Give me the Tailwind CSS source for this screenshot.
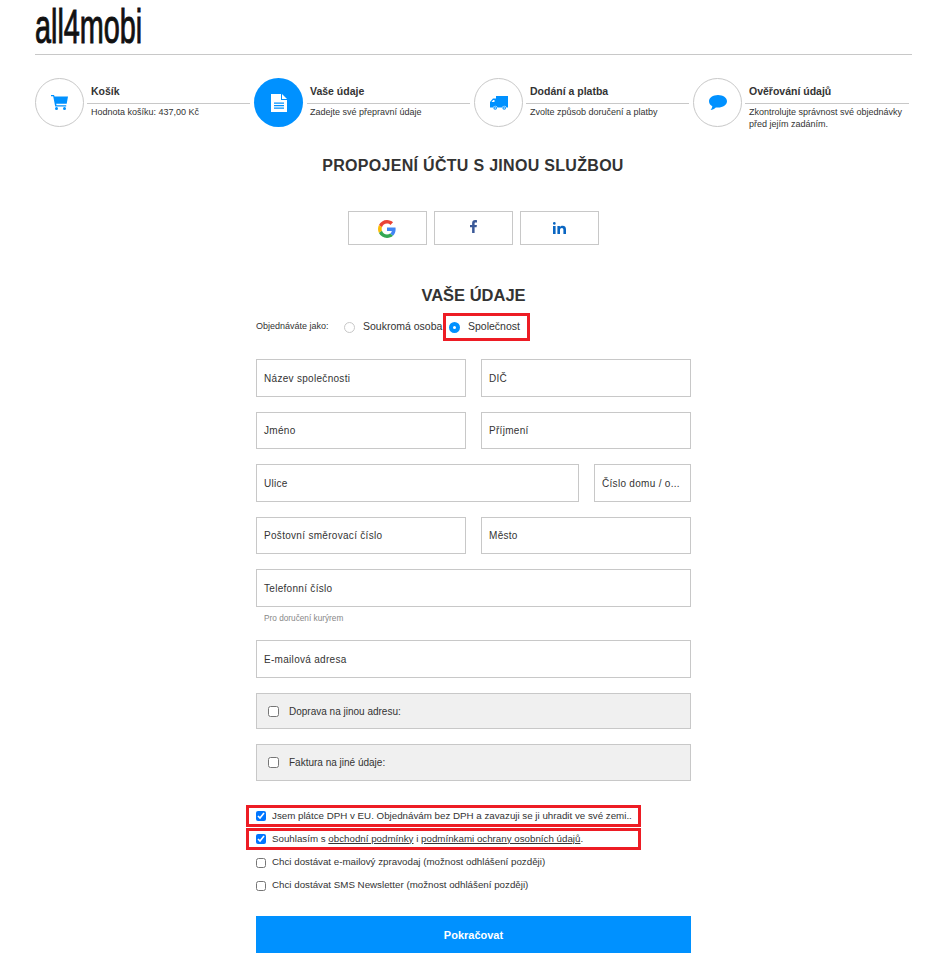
<!DOCTYPE html>
<html lang="cs">
<head>
    <meta charset="UTF-8">
    <script src="https://cdn.jsdelivr.net/npm/@tailwindcss/browser@4"></script>
</head>
<body class="bg-white text-[#333] font-['Liberation_Sans',Arial,sans-serif] overflow-hidden">
    <div class="w-[946px] h-[972px] overflow-hidden">
        <!-- logo -->
        <header class="mx-[35px] w-[877px] h-[55px] pt-[3px] border-b border-[#c8c8c8]">
            <div class="h-[48px] text-[48px] leading-[48px] text-[#111] [-webkit-text-stroke:1px_#111] origin-left scale-x-[0.6] whitespace-nowrap">all4mobi</div>
        </header>

        <!-- steps -->
        <nav class="flex ml-[35px] mt-[23px] h-[50px]">
            <div class="flex w-[219px]">
                <div class="w-[49px] h-[49px] shrink-0 rounded-full border border-[#c8c8c8] flex items-center justify-center">
                    <svg class="w-[17px] h-[15px]" viewBox="0 0 17 15" fill="#0091ff"><path d="M0 0h3l.6 1.6H17l-1.3 7.2H5.200l.3 1.400h9.700v1.300H4.200L2.200 1.300H0z"/><circle cx="5.500" cy="13.500" r="1.500"/><circle cx="13.500" cy="13.500" r="1.500"/></svg>
                </div>
                <div class="w-[163px] ml-[3px]">
                    <div class="h-[26px] pl-[4px] pt-[7px] text-[10.500px] leading-[13px] font-bold border-b border-[#c8c8c8]">Košík</div>
                    <div class="pl-[4px] pt-[2px] text-[9px] leading-[13px]">Hodnota košíku: 437,00 Kč</div>
                </div>
            </div>
            <div class="flex w-[220px]">
                <div class="w-[49px] h-[49px] shrink-0 rounded-full bg-[#0091ff] flex items-center justify-center">
                    <svg class="w-[16px] h-[18px]" viewBox="0 0 16 18" fill="#fff"><path d="M0 0h10v6h6v12H0z"/><path d="M11 0l5 5h-5z"/><path d="M3 8.500h10v1.200H3zM3 11h10v1.200H3zM3 13.500h10v1.200H3z" fill="#0091ff"/></svg>
                </div>
                <div class="w-[163px] ml-[4px]">
                    <div class="h-[26px] pl-[3px] pt-[7px] text-[10.500px] leading-[13px] font-bold border-b border-[#c8c8c8]">Vaše údaje</div>
                    <div class="pl-[3px] pt-[2px] text-[9px] leading-[13px]">Zadejte své přepravní údaje</div>
                </div>
            </div>
            <div class="flex w-[219px]">
                <div class="w-[49px] h-[49px] shrink-0 rounded-full border border-[#c8c8c8] flex items-center justify-center">
                    <svg class="w-[18px] h-[14px]" viewBox="0 0 18 14" fill="#0091ff"><path d="M6 0h12v11.500h-1.600a2.200 2.200 0 0 0-4.300 0H7.400a2.200 2.200 0 0 0-4.300 0H0V6l3-3.500h3z"/><path d="M1.500 6h3V4H3.200z" fill="#fff"/><circle cx="5.200" cy="12" r="1.800"/><circle cx="14.200" cy="12" r="1.800"/><circle cx="5.200" cy="12" r=".7" fill="#fff"/><circle cx="14.200" cy="12" r=".7" fill="#fff"/></svg>
                </div>
                <div class="w-[163px] ml-[3px]">
                    <div class="h-[26px] pl-[4px] pt-[7px] text-[10.500px] leading-[13px] font-bold border-b border-[#c8c8c8]">Dodání a platba</div>
                    <div class="pl-[4px] pt-[2px] text-[9px] leading-[13px]">Zvolte způsob doručení a platby</div>
                </div>
            </div>
            <div class="flex w-[219px]">
                <div class="w-[49px] h-[49px] shrink-0 rounded-full border border-[#c8c8c8] flex items-center justify-center">
                    <svg class="w-[18px] h-[15px]" viewBox="0 0 18 15" fill="#0091ff"><path d="M9 0c5 0 9 2.800 9 6.300s-4 6.300-9 6.300c-.8 0-1.500-.1-2.200-.2C5.400 13.700 3.500 14.800 1.500 15c1-1 1.700-2.200 1.800-3.700C1.300 10.200 0 8.400 0 6.300 0 2.800 4 0 9 0z"/></svg>
                </div>
                <div class="w-[164px] ml-[3px]">
                    <div class="h-[26px] pl-[4px] pt-[7px] text-[10.500px] leading-[13px] font-bold border-b border-[#c8c8c8]">Ověřování údajů</div>
                    <div class="pl-[4px] pt-[2px] text-[9px] leading-[12px] whitespace-nowrap">Zkontrolujte správnost své objednávky<br>před jejím zadáním.</div>
                </div>
            </div>
        </nav>

        <h2 class="mt-[28px] text-center text-[16px] leading-[20px] font-bold tracking-[0.3px]">PROPOJENÍ ÚČTU S JINOU SLUŽBOU</h2>

        <!-- social -->
        <div class="flex justify-center gap-[7px] mt-[35px]">
            <div class="w-[79px] h-[34px] border border-[#c8c8c8] flex items-center justify-center">
                <svg class="w-[18px] h-[18px] mt-[2px]" viewBox="0 0 48 48"><path fill="#EA4335" d="M24 9.500c3.540 0 6.710 1.220 9.210 3.600l6.850-6.850C35.900 2.380 30.470 0 24 0 14.620 0 6.510 5.380 2.560 13.220l7.980 6.190C12.430 13.720 17.740 9.500 24 9.500z"/><path fill="#4285F4" d="M46.980 24.550c0-1.570-.15-3.090-.38-4.550H24v9.020h12.940c-.58 2.960-2.260 5.480-4.780 7.180l7.730 6c4.510-4.180 7.090-10.360 7.090-17.650z"/><path fill="#FBBC05" d="M10.530 28.590c-.48-1.450-.76-2.990-.76-4.590s.27-3.140.76-4.590l-7.980-6.190C.92 16.460 0 20.120 0 24c0 3.880.92 7.540 2.560 10.780l7.970-6.190z"/><path fill="#34A853" d="M24 48c6.480 0 11.930-2.130 15.890-5.810l-7.730-6c-2.150 1.450-4.920 2.300-8.160 2.300-6.260 0-11.570-4.220-13.470-9.910l-7.980 6.190C6.510 42.620 14.620 48 24 48z"/></svg>
            </div>
            <div class="w-[79px] h-[34px] border border-[#c8c8c8] flex items-center justify-center">
                <svg class="w-[7px] h-[13px] -mt-[3px]" viewBox="0 0 7 13" fill="#3b5998"><path d="M4.600 13V7.200h2l.3-2.300H4.600V3.500c0-.7.200-1.100 1.100-1.100H7V.3C6.800.2 6 .1 5.100.1 3.300.1 2.100 1.200 2.100 3.200v1.700H0v2.300h2.100V13z"/></svg>
            </div>
            <div class="w-[79px] h-[34px] border border-[#c8c8c8] flex items-center justify-center">
                <svg class="w-[13px] h-[12px] ml-[1px]" viewBox="0 0 13 12" fill="#0a66c2"><path d="M0 4h2.600v8H0zM1.300 0a1.400 1.400 0 1 1 0 2.800 1.400 1.400 0 0 1 0-2.800zM4.400 4h2.500v1.100C7.300 4.400 8.200 3.800 9.500 3.800c2.600 0 3.500 1.600 3.500 4V12h-2.600V8.300c0-1.200-.3-2.200-1.500-2.200S7 7 7 8.300V12H4.400z"/></svg>
            </div>
        </div>

        <!-- form -->
        <main class="w-[435px] ml-[256px]">
            <h2 class="mt-[39px] text-center text-[16.500px] leading-[22px] font-bold">VAŠE ÚDAJE</h2>
            <div class="flex items-center h-[28px] mt-[7px] whitespace-nowrap">
                <span class="w-[88px] text-[9px]">Objednáváte jako:</span>
                <span class="w-[11px] h-[11px] rounded-full border border-[#c8c8c8]"></span>
                <span class="ml-[8px] text-[10.500px] w-[80px]">Soukromá osoba</span>
                <div class="flex items-center w-[87px] h-[28px] border-[3px] border-[#ed1c24] text-[10.500px]">
                    <span class="ml-[3px] w-[11px] h-[11px] rounded-full border-[4px] border-[#0091ff] bg-white"></span>
                    <span class="ml-[8px]">Společnost</span>
                </div>
            </div>

            <div class="flex flex-col gap-[15px] mt-[18px] text-[10px] tracking-[0.3px]">
                <div class="flex gap-[15px]">
                    <div class="w-[210px] h-[38px] border border-[#c8c8c8] flex items-center px-[7px]">Název společnosti</div>
                    <div class="w-[210px] h-[38px] border border-[#c8c8c8] flex items-center px-[7px]">DIČ</div>
                </div>
                <div class="flex gap-[15px]">
                    <div class="w-[210px] h-[37px] border border-[#c8c8c8] flex items-center px-[7px]">Jméno</div>
                    <div class="w-[210px] h-[37px] border border-[#c8c8c8] flex items-center px-[7px]">Příjmení</div>
                </div>
                <div class="flex gap-[15px]">
                    <div class="w-[323px] h-[38px] border border-[#c8c8c8] flex items-center px-[7px]">Ulice</div>
                    <div class="w-[97px] h-[38px] border border-[#c8c8c8] flex items-center px-[7px] whitespace-nowrap">Číslo domu / o...</div>
                </div>
                <div class="flex gap-[15px]">
                    <div class="w-[210px] h-[37px] border border-[#c8c8c8] flex items-center px-[7px]">Poštovní směrovací číslo</div>
                    <div class="w-[210px] h-[37px] border border-[#c8c8c8] flex items-center px-[7px]">Město</div>
                </div>
                <div>
                    <div class="h-[38px] border border-[#c8c8c8] flex items-center px-[7px]">Telefonní číslo</div>
                    <div class="pl-[8px] mt-[5px] text-[8.250px] leading-[13px] tracking-normal text-[#888]">Pro doručení kurýrem</div>
                </div>
                <div class="h-[38px] border border-[#c8c8c8] flex items-center px-[7px]">E-mailová adresa</div>
                <label class="h-[36px] flex items-center bg-[#f0f0f0] border border-[#c8c8c8] px-[11px] tracking-normal">
                    <input type="checkbox" class="w-[11px] h-[11px] m-0 mr-[10px]">Doprava na jinou adresu:
                </label>
                <label class="h-[37px] flex items-center bg-[#f0f0f0] border border-[#c8c8c8] px-[11px] tracking-normal">
                    <input type="checkbox" class="w-[11px] h-[11px] m-0 mr-[10px]">Faktura na jiné údaje:
                </label>
            </div>

            <div class="mt-[24px] text-[9.750px] whitespace-nowrap">
                <label class="flex items-center w-[395px] h-[22px] -ml-[10px] pl-[7px] border-[3px] border-[#ed1c24]">
                    <input type="checkbox" checked class="w-[10px] h-[10px] m-0 mr-[6px] accent-[#0075ff]">Jsem plátce DPH v EU. Objednávám bez DPH a zavazuji se ji uhradit ve své zemi..
                </label>
                <label class="flex items-center w-[395px] h-[22px] -ml-[10px] mt-[1px] pl-[7px] border-[3px] border-[#ed1c24]">
                    <input type="checkbox" checked class="w-[10px] h-[10px] m-0 mr-[6px] accent-[#0075ff]"><span>Souhlasím s <u>obchodní podmínky</u> i <u>podmínkami ochrany osobních údajů</u>.</span>
                </label>
                <label class="flex items-center h-[23px] mt-[1px]">
                    <input type="checkbox" class="w-[10px] h-[10px] m-0 mr-[6px]">Chci dostávat e-mailový zpravodaj (možnost odhlášení později)
                </label>
                <label class="flex items-center h-[23px]">
                    <input type="checkbox" class="w-[10px] h-[10px] m-0 mr-[6px]">Chci dostávat SMS Newsletter (možnost odhlášení později)
                </label>
            </div>

            <button class="block w-full h-[37px] mt-[19px] pt-[1px] bg-[#0091ff] text-white text-[11px] font-bold">Pokračovat</button>
        </main>
    </div>
</body>
</html>
